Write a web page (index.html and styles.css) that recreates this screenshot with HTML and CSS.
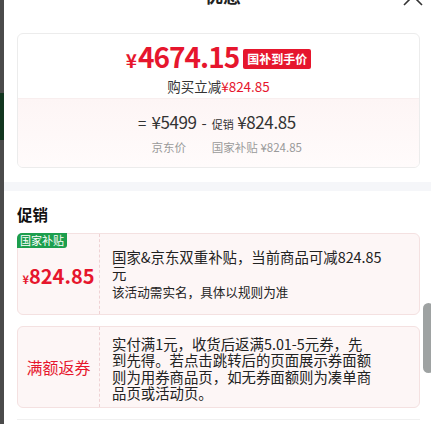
FILE: index.html
```html
<!DOCTYPE html>
<html lang="zh-CN">
<head>
    <meta charset="UTF-8">
    <meta name="viewport" content="width=device-width, initial-scale=1.0">
    <title>优惠</title>
    <link rel="stylesheet" href="styles.css">
</head>
<body>
    <div class="backdrop">
        <div class="backdrop-green"></div>
    </div>

    <div class="panel">
        <div class="panel-header">
            <span class="panel-title">优惠</span>
            <svg class="panel-close" width="20" height="20" viewBox="0 0 20 20">
                <path d="M1 1 L19 19 M19 1 L1 19" stroke="#333" stroke-width="1.6" fill="none"/>
            </svg>
        </div>

        <div class="price-card">
            <div class="price-top">
                <div class="price-row">
                    <span class="final-price"><span class="yen">¥</span>4674.15</span>
                    <span class="price-badge">国补到手价</span>
                </div>
                <div class="price-save">购买立减<span class="red">¥824.85</span></div>
            </div>
            <div class="price-bottom">
                <div class="formula">
                    <span class="op">=</span>
                    <span class="num">¥5499</span>
                    <span class="op">-</span>
                    <span class="num"><span class="small">促销</span> ¥824.85</span>
                    <span class="label label-jd">京东价</span>
                    <span class="label label-sub">国家补贴 ¥824.85</span>
                </div>
            </div>
        </div>

        <div class="band"></div>

        <h3 class="section-title">促销</h3>

        <div class="promo">
            <div class="promo-left">
                <span class="promo-tag">国家补贴</span>
                <span class="promo-amount"><span class="yen-sm">¥</span>824.85</span>
            </div>
            <div class="promo-right">
                <p class="promo-text">国家&amp;京东双重补贴，当前商品可减824.85元</p>
                <p class="promo-note">该活动需实名，具体以规则为准</p>
            </div>
        </div>

        <div class="promo promo-coupon">
            <div class="promo-left">
                <span class="promo-name">满额返券</span>
            </div>
            <div class="promo-right">
                <p class="promo-text">实付满1元，收货后返满5.01-5元券，先到先得。若点击跳转后的页面展示券面额则为用券商品页，如无券面额则为凑单商品页或活动页。</p>
            </div>
        </div>

        <div class="bottom-line"></div>
    </div>

    <div class="scroll-thumb"></div>
</body>
</html>
```

FILE: styles.css
```css
body {
    margin: 0;
    width: 431px;
    height: 424px;
    overflow: hidden;
    display: flex;
    font-family: "Noto Sans CJK SC", "Noto Sans", sans-serif;
    color: #1a1a1a;
    background: #fff;
}

.backdrop {
    width: 4px;
    flex-shrink: 0;
    background: #4b4b4b;
    padding-top: 93px;
    box-sizing: border-box;
}

.backdrop-green {
    height: 47px;
    background: #12361f;
}

.panel {
    flex: 1;
    padding: 0 11px 0 13px;
}

.panel-header {
    height: 33px;
    display: flex;
    justify-content: center;
    position: relative;
}

.panel-title {
    font-size: 18px;
    font-weight: bold;
    line-height: 20px;
    margin-top: -15px;
    padding-left: 9px;
    color: #222;
}

.panel-close {
    position: absolute;
    right: -3px;
    top: -14px;
}

.price-card {
    border: 1px solid #ececec;
    border-radius: 6px;
    overflow: hidden;
}

.price-top {
    height: 64px;
    padding-top: 9px;
    box-sizing: border-box;
    text-align: center;
}

.price-row {
    display: flex;
    justify-content: center;
    align-items: center;
    gap: 4px;
    height: 30px;
}

.final-price {
    color: #e6162d;
    font-size: 28px;
    font-weight: bold;
    line-height: 30px;
    letter-spacing: -1px;
}

.yen {
    font-size: 19px;
    margin-right: 2px;
}

.price-badge {
    background: #e6162d;
    color: #fff;
    font-size: 12px;
    font-weight: bold;
    line-height: 20px;
    padding: 0 4px;
    border-radius: 2px;
    margin-top: 2px;
}

.price-save {
    font-size: 13.5px;
    line-height: 18px;
    margin-top: 4px;
    color: #333;
}

.red {
    color: #e6162d;
}

.price-bottom {
    height: 69px;
    border-top: 1px solid #f8eeee;
    background: linear-gradient(to bottom, #fdf5f5, #fffbfb);
    padding-top: 12px;
    box-sizing: border-box;
}

.formula {
    display: grid;
    grid-template-columns: auto auto auto auto;
    justify-content: center;
    column-gap: 5px;
    align-items: baseline;
    color: #333;
    padding-left: 3px;
}

.formula .num {
    font-size: 17px;
    line-height: 22px;
    letter-spacing: -0.4px;
}

.formula .op {
    font-size: 15px;
    line-height: 22px;
}

.formula .small {
    font-size: 11px;
    letter-spacing: 0;
}

.formula .label {
    font-size: 11.5px;
    line-height: 18px;
    margin-top: 3px;
    color: #9a9a9a;
}

.label-jd {
    grid-column: 2;
}

.label-sub {
    grid-column: 4;
}

.band {
    height: 9px;
    background: #f5f6f9;
    margin: 14px -11px 0 -13px;
}

.section-title {
    margin: 0;
    padding-top: 12px;
    height: 42px;
    box-sizing: border-box;
    font-size: 15.5px;
    line-height: 22px;
    font-weight: bold;
    color: #111;
}

.promo {
    display: flex;
    height: 82px;
    margin-bottom: 11px;
    background: #fdf6f6;
    border: 1px solid #f4e1e1;
    border-radius: 6px;
    box-sizing: border-box;
}

.promo-left {
    width: 82px;
    flex-shrink: 0;
    position: relative;
    display: flex;
    justify-content: center;
    align-items: center;
    border-right: 1px dashed #efd2d4;
    box-sizing: border-box;
}

.promo-tag {
    position: absolute;
    left: -1px;
    top: -1px;
    background: #1c9e4d;
    color: #fff;
    font-size: 11px;
    line-height: 15px;
    padding: 0 3px;
    border-radius: 5px 0 3px 0;
}

.promo-amount {
    color: #e6162d;
    font-size: 20px;
    font-weight: bold;
    margin-top: 2px;
}

.yen-sm {
    font-size: 11px;
}

.promo-name {
    color: #e6162d;
    font-size: 16px;
}

.promo-right {
    width: 275px;
    padding-left: 12px;
    display: flex;
    flex-direction: column;
    justify-content: center;
}

.promo-coupon .promo-right {
    width: 262px;
    padding-top: 3px;
}

.promo-text {
    margin: 0;
    font-size: 14.4px;
    line-height: 16.5px;
    color: #222;
}

.promo-note {
    margin: 1px 0 0;
    font-size: 12.6px;
    line-height: 17px;
    color: #222;
}

.bottom-line {
    border-top: 1px solid #f0f0f0;
    margin-top: 3px;
}

.scroll-thumb {
    position: fixed;
    right: -3px;
    top: 303px;
    width: 11px;
    height: 70px;
    border-radius: 6px;
    background: #9ea2a2;
}
```
